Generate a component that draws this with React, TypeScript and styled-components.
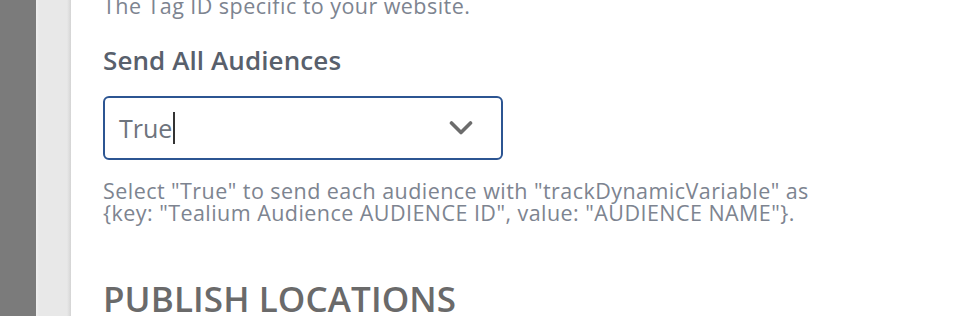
import React from 'react';
import styled, { createGlobalStyle } from 'styled-components';

const GlobalStyle = createGlobalStyle`
  html, body {
    margin: 0;
    padding: 0;
    background: #ffffff;
    overflow: hidden;
  }
  body {
    font-family: "Open Sans", "Liberation Sans", sans-serif;
  }
`;

const Page = styled.div`
  display: flex;
  height: 316px;
  width: 972px;
  overflow: hidden;
`;

const Backdrop = styled.div`
  width: 36px;
  flex-shrink: 0;
  background: #7b7b7b;
`;

const Gutter = styled.div`
  width: 35px;
  flex-shrink: 0;
  background: linear-gradient(to right, #f0f0f0 0px, #e8e8e8 3px, #e8e8e8 31px, #d4d4d4 35px);
`;

const Panel = styled.div`
  flex: 1;
  background: #fff;
  padding: 0 0 0 32px;
  margin-top: -5px;
`;

const Hint = styled.p<{ $gap?: number }>`
  margin: ${(p) => p.$gap ?? 0}px 0 0;
  font-size: 21.5px;
  line-height: 22px;
  color: #7d8490;
  letter-spacing: 0.45px;
  white-space: nowrap;
`;

const Label = styled.h4`
  margin: 28px 0 0;
  font-size: 26px;
  line-height: 30px;
  font-weight: 600;
  color: #58606c;
  letter-spacing: 0.1px;
`;

const Select = styled.div`
  margin-top: 21px;
  width: 400px;
  height: 64px;
  box-sizing: border-box;
  border: 2px solid #2c5592;
  border-radius: 6px;
  display: flex;
  align-items: center;
  padding: 0 28px 0 14px;
`;

const Value = styled.span`
  flex: 1;
  font-size: 25px;
  color: #6e747d;
  display: flex;
  align-items: center;
`;

const Caret = styled.span`
  display: inline-block;
  width: 1.5px;
  height: 32px;
  background: #333;
  margin-left: 1px;
`;

const Heading = styled.h2`
  margin: 55px 0 0;
  font-size: 35px;
  line-height: 40px;
  font-weight: 600;
  color: #6a6a6a;
  letter-spacing: 0.1px;
`;

const Chevron = () => (
  <svg width="24" height="16" viewBox="0 0 24 16">
    <path d="M2.5 3 L12 12.5 L21.5 3" fill="none" stroke="#6c6c6c" strokeWidth="3.6" strokeLinecap="round" strokeLinejoin="round" />
  </svg>
);

export default function App() {
  return (
    <Page>
      <GlobalStyle />
      <Backdrop />
      <Gutter />
      <Panel>
        <Hint>The Tag ID specific to your website.</Hint>
        <Label>Send All Audiences</Label>
        <Select>
          <Value>
            True
            <Caret />
          </Value>
          <Chevron />
        </Select>
        <Hint $gap={20}>
          Select "True" to send each audience with "trackDynamicVariable" as
          <br />
          {'{key: "Tealium Audience AUDIENCE ID", value: "AUDIENCE NAME"}.'}
        </Hint>
        <Heading>PUBLISH LOCATIONS</Heading>
      </Panel>
    </Page>
  );
}
